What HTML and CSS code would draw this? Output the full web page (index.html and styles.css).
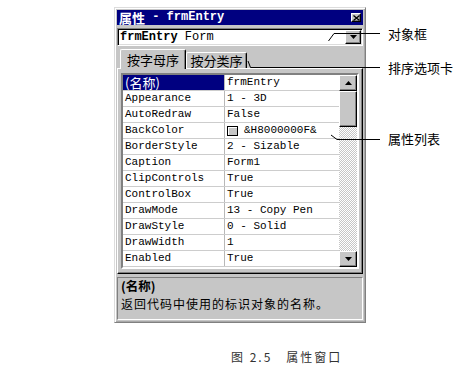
FILE: index.html
```html
<!DOCTYPE html>
<html lang="zh-CN">
<head>
    <meta charset="UTF-8">
    <title>属性窗口</title>
    <link rel="stylesheet" href="styles.css">
</head>
<body>
    <div class="page">
        <div class="window">
            <div class="titlebar">
                <span class="title-cn">属性</span><span class="title-en">&nbsp;- frmEntry</span>
                <span class="btn close-btn">
                    <svg width="7" height="6" viewBox="0 0 7 6"><path d="M0.5 0.5 L6.5 5.5 M6.5 0.5 L0.5 5.5" stroke="#000" stroke-width="1.3"/></svg>
                </span>
            </div>
            <div class="combo">
                <span class="combo-text"><b>frmEntry</b> Form</span>
                <span class="btn drop-btn">
                    <svg width="7" height="4" viewBox="0 0 7 4"><polygon points="0,0 7,0 3.5,4" fill="#000"/></svg>
                </span>
            </div>
            <div class="tabs">
                <div class="tab active">按字母序</div>
                <div class="tab">按分类序</div>
            </div>
            <div class="tab-panel">
                <div class="grid">
                    <div class="rows">
                        <div class="row selected"><span class="name">(名称)</span><span class="value">frmEntry</span></div>
                        <div class="row"><span class="name">Appearance</span><span class="value">1 - 3D</span></div>
                        <div class="row"><span class="name">AutoRedraw</span><span class="value">False</span></div>
                        <div class="row"><span class="name">BackColor</span><span class="value"><i class="swatch"></i>&amp;H8000000F&amp;</span></div>
                        <div class="row"><span class="name">BorderStyle</span><span class="value">2 - Sizable</span></div>
                        <div class="row"><span class="name">Caption</span><span class="value">Form1</span></div>
                        <div class="row"><span class="name">ClipControls</span><span class="value">True</span></div>
                        <div class="row"><span class="name">ControlBox</span><span class="value">True</span></div>
                        <div class="row"><span class="name">DrawMode</span><span class="value">13 - Copy Pen</span></div>
                        <div class="row"><span class="name">DrawStyle</span><span class="value">0 - Solid</span></div>
                        <div class="row"><span class="name">DrawWidth</span><span class="value">1</span></div>
                        <div class="row"><span class="name">Enabled</span><span class="value">True</span></div>
                    </div>
                    <div class="scrollbar">
                        <span class="btn sb-btn">
                            <svg width="7" height="4" viewBox="0 0 7 4"><polygon points="0,4 7,4 3.5,0" fill="#000"/></svg>
                        </span>
                        <span class="btn sb-thumb"></span>
                        <span class="sb-track"></span>
                        <span class="btn sb-btn">
                            <svg width="7" height="4" viewBox="0 0 7 4"><polygon points="0,0 7,0 3.5,4" fill="#000"/></svg>
                        </span>
                    </div>
                </div>
            </div>
            <div class="desc">
                <div class="desc-title">(名称)</div>
                <div class="desc-text">返回代码中使用的标识对象的名称。</div>
            </div>
        </div>

        <div class="caption">图 2.5<span class="caption-gap"></span>属性窗口</div>

        <!-- callouts -->
        <svg class="callout-lines" width="458" height="369" viewBox="0 0 458 369">
            <polyline points="328.5,41 334,33.5 380,33.5" fill="none" stroke="#000" stroke-width="1"/>
            <polyline points="248,61 250.5,67.5 380,67.5" fill="none" stroke="#000" stroke-width="1"/>
            <polyline points="331,135 337,139.5 380,139.5" fill="none" stroke="#000" stroke-width="1"/>
        </svg>
        <span class="callout-label lbl-object">对象框</span>
        <span class="callout-label lbl-tabs">排序选项卡</span>
        <span class="callout-label lbl-list">属性列表</span>
    </div>
</body>
</html>
```

FILE: styles.css
```css
body {
    margin: 0;
    background: #fff;
    font-family: "Noto Sans CJK SC", sans-serif;
}

.page {
    position: relative;
    width: 458px;
    height: 369px;
    overflow: hidden;
}

/* window frame */
.window {
    box-sizing: border-box;
    width: 252px;
    height: 316px;
    margin: 7px 0 0 114px;
    padding: 2px;
    display: flex;
    flex-direction: column;
    background: #c6c6c6;
    border: 1px solid;
    border-color: #dcdcdc #808080 #808080 #dcdcdc;
    box-shadow: inset 1px 1px #fff, inset -1px -1px #a8a8a8;
}

.btn {
    box-sizing: border-box;
    display: flex;
    align-items: center;
    justify-content: center;
    background: #c6c6c6;
    border: 1px solid;
    border-color: #fff #000 #000 #fff;
    box-shadow: inset -1px -1px #808080;
}

.titlebar {
    height: 15px;
    display: flex;
    align-items: center;
    padding: 0 2px;
    background: #000080;
    color: #fff;
}

.title-cn {
    font-size: 13px;
    font-weight: bold;
    line-height: 15px;
}

.title-en {
    font-family: "Liberation Mono", monospace;
    font-size: 12px;
    font-weight: bold;
    line-height: 15px;
}

.close-btn {
    width: 10px;
    height: 9px;
    margin-left: auto;
}

.combo {
    box-sizing: border-box;
    height: 18px;
    margin-top: 3px;
    display: flex;
    align-items: center;
    padding: 0 1px 0 2px;
    background: #fff;
    border: 1px solid;
    border-color: #808080 #fff #fff #808080;
    box-shadow: inset 1px 1px #000, inset -1px -1px #dcdcdc;
}

.combo-text {
    font-family: "Liberation Mono", monospace;
    font-size: 12px;
    color: #000;
}

.drop-btn {
    width: 16px;
    height: 14px;
    margin-left: auto;
}

/* tabs */
.tabs {
    height: 19px;
    margin-top: 3px;
    display: flex;
    align-items: flex-end;
    padding-left: 3px;
}

.tab {
    box-sizing: border-box;
    height: 16px;
    width: 61px;
    font-size: 13px;
    line-height: 15px;
    text-align: center;
    color: #000;
    background: #c6c6c6;
    border: 1px solid;
    border-bottom: none;
    border-color: #fff #000 #000 #fff;
    border-radius: 2px 2px 0 0;
    box-shadow: inset -1px 0 #808080;
}

.tab.active {
    position: relative;
    z-index: 1;
    width: 66px;
    height: 20px;
    margin-bottom: -1px;
    line-height: 20px;
}

.tab-panel {
    box-sizing: border-box;
    height: 206px;
    padding: 4px 3px;
    border: 1px solid;
    border-color: #fff #000 #000 #fff;
    box-shadow: inset -1px -1px #808080;
}

/* property grid */
.grid {
    display: flex;
    width: 238px;
    border: 2px solid;
    border-color: #808080 #fff #fff #808080;
    box-shadow: inset 1px 1px #000;
    box-sizing: border-box;
}

.rows {
    width: 216px;
    background: #fff;
}

.row {
    box-sizing: border-box;
    display: flex;
    height: 16px;
    border-bottom: 1px solid #cdcdcd;
    font-family: "Liberation Mono", monospace;
    font-size: 11px;
    line-height: 15px;
    color: #000;
}

.name {
    box-sizing: border-box;
    width: 102px;
    padding-left: 2px;
    border-right: 1px solid #b8b8b8;
    white-space: nowrap;
}

.value {
    display: flex;
    align-items: center;
    padding-left: 2px;
    white-space: nowrap;
}

.row.selected .name {
    background: #000080;
    color: #fff;
    font-family: "Noto Sans CJK SC", sans-serif;
    font-size: 13px;
}

.swatch {
    box-sizing: border-box;
    width: 11px;
    height: 10px;
    margin-right: 6px;
    background: #c6c6c6;
    border: 1px solid #000;
    box-shadow: inset 1px 1px #fff;
}

.scrollbar {
    width: 18px;
    display: flex;
    flex-direction: column;
}

.sb-btn {
    height: 16px;
}

.sb-thumb {
    height: 36px;
}

.sb-track {
    flex: 1;
    background: repeating-conic-gradient(#c6c6c6 0 25%, #fff 0 50%) 0 0 / 2px 2px;
}

/* description */
.desc {
    box-sizing: border-box;
    height: 43px;
    margin-top: 3px;
    padding: 0 3px;
    border: 1px solid;
    border-color: #808080 #fff #fff #808080;
    color: #000;
}

.desc-title {
    font-size: 12.5px;
    font-weight: bold;
    line-height: 16px;
}

.desc-text {
    margin-top: 2px;
    font-size: 12px;
    line-height: 16px;
    letter-spacing: 1px;
}

/* figure caption */
.caption {
    margin: 26px 0 0 231px;
    font-size: 12px;
    line-height: 16px;
    letter-spacing: 2px;
    color: #333;
}

.caption-gap {
    display: inline-block;
    width: 14px;
}

/* annotation callouts */
.callout-lines {
    position: absolute;
    top: 0;
    left: 0;
    pointer-events: none;
}

.callout-label {
    position: absolute;
    left: 388px;
    font-size: 13px;
    line-height: 16px;
    color: #000;
}

.lbl-object { top: 26px; }
.lbl-tabs { top: 60px; }
.lbl-list { top: 131px; }
```
